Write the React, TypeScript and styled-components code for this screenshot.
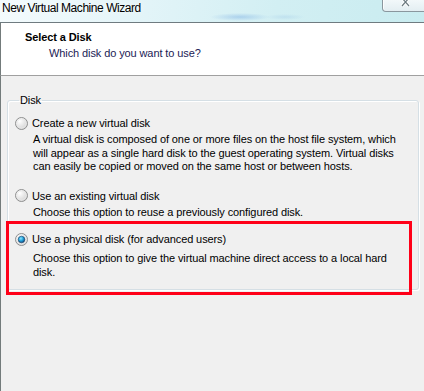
import React from "react"
import styled, { createGlobalStyle } from "styled-components"

const GlobalStyle = createGlobalStyle`
    html, body {
        margin: 0;
        padding: 0;
        background: #f0f0f0;
    }
    body {
        font-family: "Liberation Sans", Arial, sans-serif;
        font-size: 11px;
        letter-spacing: -0.1px;
        color: #000;
    }
`;

export const Window = styled.div `
    width: 424px;
    height: 391px;
    overflow: hidden;
    display: flex;
    flex-direction: column;
    background: #f0f0f0;
`;

export const TitleBar = styled.div `
    height: 22px;
    flex: 0 0 22px;
    display: flex;
    justify-content: space-between;
    align-items: flex-start;
    background:
        radial-gradient(ellipse 30px 4px at 240px 17px, rgba(90, 150, 220, 0.35), transparent),
        radial-gradient(ellipse 20px 3px at 285px 17px, rgba(120, 170, 220, 0.2), transparent),
        linear-gradient(100deg, #f4fbfd 0%, #e2f4f8 35%, #d2eff3 65%, #c9ecf0 100%);
`;

export const Title = styled.span `
    font-family: "Liberation Sans", Arial, sans-serif;
    font-size: 12px;
    letter-spacing: -0.45px;
    line-height: 16px;
    padding: 0 0 0 2px;
    color: #000;
    text-shadow: 0 0 6px rgba(255, 255, 255, 0.9);
`;

export const CloseButton = styled.div `
    width: 48px;
    height: 12px;
    margin-right: -6px;
    box-sizing: border-box;
    border: 1px solid #8a979e;
    border-top: none;
    border-bottom-left-radius: 4px;
    background: linear-gradient(#f2f8fa, #e3eef2);
    box-shadow: inset 1px 0 0 rgba(255, 255, 255, 0.8);
    display: flex;
    justify-content: center;
    align-items: flex-start;
    overflow: hidden;
`;

export const Header = styled.div `
    flex: 0 0 auto;
    height: 45px;
    background: #fff;
    border-top: 1px solid #6f7b80;
    border-bottom: 1px solid #a0a0a0;
    border-left: 1px solid #737b7b;
    padding: 7px 0 0 24px;
`;

export const HeaderTitle = styled.div `
    font-weight: bold;
    line-height: 14px;
`;

export const HeaderSubtitle = styled.div `
    line-height: 14px;
    margin: 2px 0 0 24px;
    color: #1b1b55;
`;

export const Body = styled.div `
    flex: 1;
    border-left: 1px solid #737b7b;
    padding: 17px 5px 0 6px;
`;

export const GroupBox = styled.fieldset `
    margin: 0;
    padding: 9px 0 0 7px;
    min-inline-size: 0;
    height: 197px;
    box-sizing: border-box;
    border: 1px solid #d5dfe5;
    border-radius: 3px;
    box-shadow: 1px 1px 0 #fff, inset 1px 1px 0 #fff;
`;

export const Legend = styled.legend `
    padding: 0 1px;
    margin-left: 4px;
    line-height: 14px;
`;

export const OptionBlock = styled.div<{ $highlight?: boolean; $gap?: number }> `
    margin-top: ${p => p.$gap ?? 0}px;
    ${p => p.$highlight && `
        border: 3px solid #ff0018;
        margin-left: -9px;
        margin-right: 6px;
        padding: 8px 0 13px 6px;
    `}
`;

export const OptionRow = styled.label `
    display: flex;
    align-items: center;
    gap: 4px;
    line-height: 14px;
    height: 14px;
`;

export const Description = styled.div<{ $gap?: number }> `
    margin: ${p => p.$gap ?? 3}px 0 0 18px;
    line-height: 13.5px;
    white-space: nowrap;
`;

const Radio = ({ checked }: { checked?: boolean }) => (
    <svg width="13" height="13" viewBox="0 0 13 13">
        <defs>
            <radialGradient id="rFill" cx="0.35" cy="0.3" r="0.8">
                <stop offset="0" stopColor="#ffffff" />
                <stop offset="1" stopColor="#cfcfcf" />
            </radialGradient>
            <radialGradient id="rDot" cx="0.4" cy="0.35" r="0.7">
                <stop offset="0" stopColor="#8de6ff" />
                <stop offset="0.5" stopColor="#23a3dc" />
                <stop offset="1" stopColor="#0e3e73" />
            </radialGradient>
        </defs>
        <circle cx="6.5" cy="6.5" r="6" fill="url(#rFill)" stroke="#8e8f8f" strokeWidth="1" />
        <circle cx="6.5" cy="6.5" r="4.6" fill="none" stroke="#e8e8e8" strokeWidth="0.8" />
        {checked && <circle cx="6.5" cy="6.5" r="3.3" fill="url(#rDot)" stroke="#1a3f66" strokeWidth="0.6" />}
    </svg>
);

const Lines = ({ lines, gap }: { lines: string[]; gap?: number }) => (
    <Description $gap={gap}>
        {lines.map((l, i) => (
            <React.Fragment key={i}>
                {l}
                {i < lines.length - 1 && <br />}
            </React.Fragment>
        ))}
    </Description>
);

const App = () => {
    return (
        <Window>
            <GlobalStyle />
            <TitleBar>
                <Title>New Virtual Machine Wizard</Title>
                <CloseButton>
                    <svg width="10" height="8" viewBox="0 0 10 8">
                        <path d="M1 -2 L8 6 M8 -2 L1 6" stroke="#fff" strokeWidth="3" />
                        <path d="M1 -2 L8 6 M8 -2 L1 6" stroke="#6b7a80" strokeWidth="1.2" />
                    </svg>
                </CloseButton>
            </TitleBar>
            <Header>
                <HeaderTitle>Select a Disk</HeaderTitle>
                <HeaderSubtitle>Which disk do you want to use?</HeaderSubtitle>
            </Header>
            <Body>
                <GroupBox>
                    <Legend>Disk</Legend>
                    <OptionBlock>
                        <OptionRow><Radio />Create a new virtual disk</OptionRow>
                        <Lines lines={[
                            "A virtual disk is composed of one or more files on the host file system, which",
                            "will appear as a single hard disk to the guest operating system. Virtual disks",
                            "can easily be copied or moved on the same host or between hosts.",
                        ]} />
                    </OptionBlock>
                    <OptionBlock $gap={15}>
                        <OptionRow><Radio />Use an existing virtual disk</OptionRow>
                        <Lines lines={["Choose this option to reuse a previously configured disk."]} />
                    </OptionBlock>
                    <OptionBlock $highlight $gap={2}>
                        <OptionRow><Radio checked />Use a physical disk (for advanced users)</OptionRow>
                        <Lines gap={6} lines={[
                            "Choose this option to give the virtual machine direct access to a local hard",
                            "disk.",
                        ]} />
                    </OptionBlock>
                </GroupBox>
            </Body>
        </Window>
    )
}

export default App
